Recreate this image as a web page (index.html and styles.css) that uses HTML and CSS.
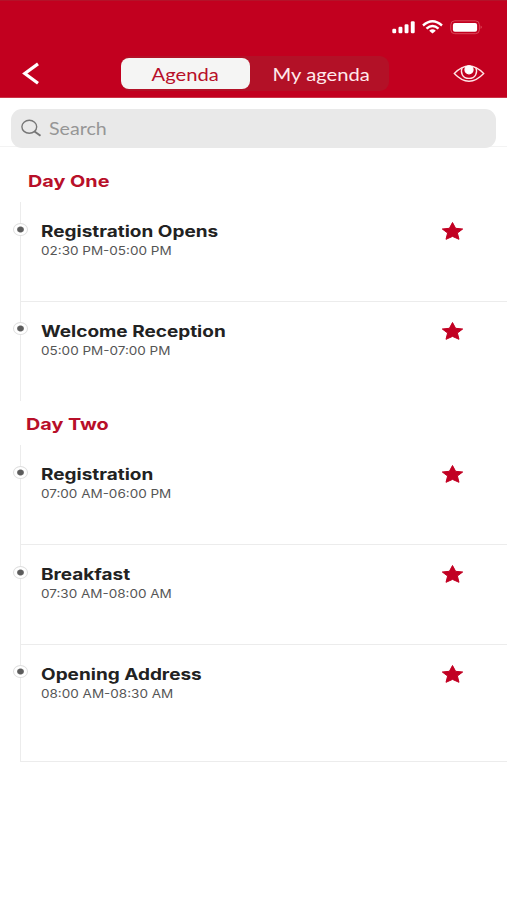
FILE: index.html
```html
<!DOCTYPE html>
<html lang="en">
<head>
<meta charset="utf-8">
<title>Agenda</title>
<link rel="stylesheet" href="styles.css">
</head>
<body>
<header class="header">
  <div class="status">
    <svg width="94" height="18" viewBox="0 0 94 18" fill="#fff">
      <rect x="3.3" y="10.8" width="3.9" height="4.4" rx="1.2"/>
      <rect x="9.5" y="8.8" width="3.9" height="6.4" rx="1.2"/>
      <rect x="15.6" y="6.2" width="3.9" height="9" rx="1.2"/>
      <rect x="21.8" y="3.2" width="3.9" height="12" rx="1.2"/>
      <g fill="none" stroke="#fff" stroke-width="2.4">
        <path d="M34 7.5Q43.5-.9 53 7.5"/>
        <path d="M37.5 10.7Q43.5 5.2 49.5 10.7"/>
      </g>
      <path d="M40.2 12.7Q43.5 10 46.8 12.7L43.5 15.5Z"/>
      <rect x="61.8" y="2.8" width="28.6" height="12.9" rx="4" fill="none" stroke="#e05a68" stroke-width=".8"/>
      <rect x="63.9" y="4.9" width="24.2" height="8.8" rx="2"/>
      <path d="M91.7 7.5Q93.7 9.2 91.7 11Z" fill="#e05a68"/>
    </svg>
  </div>
  <nav class="nav">
    <svg class="back" width="18" height="24" viewBox="0 0 18 24" fill="none" stroke="#fff" stroke-width="3.2"><path d="M16 1.900L2.800 11.500L16 21.300"/></svg>
    <div class="tabs">
      <div class="tab active"><span class="wide">Agenda</span></div>
      <div class="tab"><span class="wide">My agenda</span></div>
    </div>
    <svg class="eye" width="32" height="20" viewBox="0 0 32 20" fill="none" stroke="#ffe5e7" stroke-width="1.300">
      <path d="M1.300 9.500Q16-5.500 30.700 9.500Q16 25 1.300 9.500Z"/>
      <path d="M9.200 3.800C7 8.500 9.500 14.400 16 14.400S25 8.500 22.800 3.800"/>
      <circle cx="16" cy="5.800" r="4" fill="#fff" stroke="#fff"/>
    </svg>
  </nav>
</header>
<div class="searchbar">
  <div class="field">
    <svg width="22" height="18" viewBox="0 0 22 18" fill="none" stroke="#777"><ellipse cx="8.300" cy="7.800" rx="7.400" ry="6.500" stroke-width="1.400"/><path d="M13.500 12.500L19.500 16.800" stroke-width="2"/></svg>
    <span class="wide">Search</span>
  </div>
</div>
<main>
  <section>
    <h2><span class="wide">Day One</span></h2>
    <ul class="events">
      <li class="event"><i class="dot"></i><div class="info"><h3 class="wide">Registration Opens</h3><p class="wide">02:30 PM-05:00 PM</p></div><svg class="star" viewBox="0 0 24 20"><path d="M12 1.500L15.100 7.300L22.200 8L16.900 12L18.500 18.300L12 15.400L5.500 18.300L7.100 12L1.800 8L8.900 7.300Z"/></svg></li>
      <li class="event"><i class="dot"></i><div class="info"><h3 class="wide">Welcome Reception</h3><p class="wide">05:00 PM-07:00 PM</p></div><svg class="star" viewBox="0 0 24 20"><path d="M12 1.500L15.100 7.300L22.200 8L16.900 12L18.500 18.300L12 15.400L5.500 18.300L7.100 12L1.800 8L8.900 7.300Z"/></svg></li>
    </ul>
  </section>
  <section class="second">
    <h2><span class="wide">Day Two</span></h2>
    <ul class="events">
      <li class="event"><i class="dot"></i><div class="info"><h3 class="wide">Registration</h3><p class="wide">07:00 AM-06:00 PM</p></div><svg class="star" viewBox="0 0 24 20"><path d="M12 1.500L15.100 7.300L22.200 8L16.900 12L18.500 18.300L12 15.400L5.500 18.300L7.100 12L1.800 8L8.900 7.300Z"/></svg></li>
      <li class="event"><i class="dot"></i><div class="info"><h3 class="wide">Breakfast</h3><p class="wide">07:30 AM-08:00 AM</p></div><svg class="star" viewBox="0 0 24 20"><path d="M12 1.500L15.100 7.300L22.200 8L16.900 12L18.500 18.300L12 15.400L5.500 18.300L7.100 12L1.800 8L8.900 7.300Z"/></svg></li>
      <li class="event last"><i class="dot"></i><div class="info"><h3 class="wide">Opening Address</h3><p class="wide">08:00 AM-08:30 AM</p></div><svg class="star" viewBox="0 0 24 20"><path d="M12 1.500L15.100 7.300L22.200 8L16.900 12L18.500 18.300L12 15.400L5.500 18.300L7.100 12L1.800 8L8.900 7.300Z"/></svg></li>
    </ul>
  </section>
</main>
</body>
</html>
```
FILE: styles.css
```css
* { box-sizing: border-box; margin: 0; padding: 0; }
body {
  width: 507px;
  height: 900px;
  overflow: hidden;
  background: #fff;
  font-family: Inter, "Liberation Sans", sans-serif;
}
.wide { display: inline-block; white-space: nowrap; transform: scaleX(1.2); transform-origin: left center; }
.header { height: 98px; background: #c2001f; border-top: 1px solid #b41229; border-bottom: 1px solid #ca3548; }
.status { height: 54px; padding: 17px 24px 0 0; display: flex; justify-content: flex-end; align-items: flex-start; }
.nav { display: flex; align-items: center; height: 37px; padding: 0 22px; }
.back { flex: none; }
.tabs { flex: none; display: flex; width: 268px; height: 35px; margin-left: 81px; padding: 2px 0; border-radius: 9px; background: #b31127; }
.tab { width: 129px; display: flex; align-items: center; justify-content: center; border-radius: 8px; padding-top: 1px; font: 17.500px Lato, sans-serif; color: #ffe9eb; }
.tab + .tab { width: 139px; padding-left: 3px; }
.tab.active { background: #f5f5f4; color: #b80f29; }
.tab .wide { transform: scaleX(1.152); transform-origin: center; }
.eye { margin-left: auto; }
.searchbar { height: 50px; padding: 10.500px 11px 0; background: linear-gradient(#f3f3f3, #f3f3f3) 0 48px / 100% 1px no-repeat; }
.field { display: flex; align-items: center; gap: 6px; height: 39px; padding-left: 10px; border-radius: 11px; background: #e9e9e9; color: #969696; font: 18px Lato, sans-serif; }
.field .wide { transform: scaleX(1.09); }
h2 { height: 54px; padding: 24px 0 0 28px; font-size: 16.500px; line-height: 18px; font-weight: 700; color: #b80f29; }
.second h2 { height: 44px; padding: 14px 0 0 26px; }
.events { list-style: none; margin-left: 20px; border-left: 1px solid #ececec; }
.event { display: flex; align-items: flex-start; height: 99.700px; border-bottom: 1px solid #ececec; }
.events .event:nth-child(2):last-child { border-bottom: 0; }
.event.last { height: 117px; }
.dot { flex: none; width: 15px; height: 13px; margin: 20.500px 0 0 -8px; border: 1px solid #dedede; border-radius: 50%; background: radial-gradient(ellipse 4px 3.500px at center, #5c5c5c 70%, #fff 100%); }
.info { flex: none; padding: 20px 0 0 13px; width: 412px; }
.info h3 { display: block; width: 300px; font-size: 15.500px; line-height: 20px; font-weight: 700; color: #222; transform: scaleX(1.225); }
.info p { display: block; width: 300px; margin-top: 1px; font-size: 11.300px; line-height: 16px; color: #555; transform: scaleX(1.195); }
.star { flex: none; width: 25px; height: 20px; margin-top: 19px; fill: #c20022; overflow: visible; stroke: #c20022; stroke-width: 1; stroke-linejoin: round; }
```
